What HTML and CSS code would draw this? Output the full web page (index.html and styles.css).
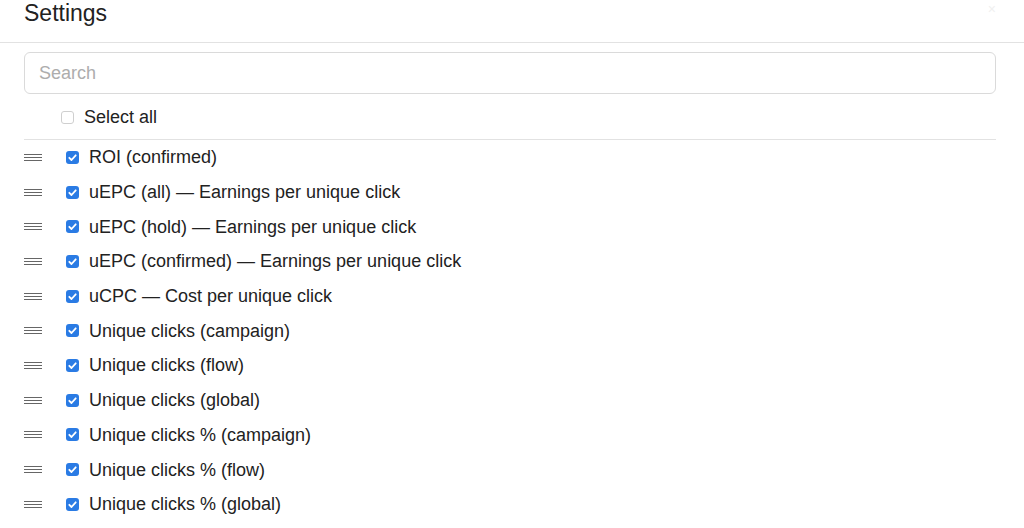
FILE: index.html
```html
<!DOCTYPE html>
<html>
<head>
<meta charset="utf-8">
<link rel="stylesheet" href="styles.css">
</head>
<body>
<div class="header">
  <h1 class="title">Settings</h1>
  <span class="close">×</span>
</div>
<div class="content">
  <div class="search">Search</div>
  <div class="select-all">
    <span class="box"></span>
    <span class="label">Select all</span>
  </div>
  <ul class="list">
    <li class="row"><span class="handle"><i></i><i></i><i></i></span><span class="check"><svg viewBox="0 0 13 13" width="13" height="13"><path d="M3.3 6.8 L5.5 9 L9.7 4.3" fill="none" stroke="#fff" stroke-width="1.8" stroke-linecap="round" stroke-linejoin="round"/></svg></span><span class="label">ROI (confirmed)</span></li>
    <li class="row"><span class="handle"><i></i><i></i><i></i></span><span class="check"><svg viewBox="0 0 13 13" width="13" height="13"><path d="M3.3 6.8 L5.5 9 L9.7 4.3" fill="none" stroke="#fff" stroke-width="1.8" stroke-linecap="round" stroke-linejoin="round"/></svg></span><span class="label">uEPC (all) — Earnings per unique click</span></li>
    <li class="row"><span class="handle"><i></i><i></i><i></i></span><span class="check"><svg viewBox="0 0 13 13" width="13" height="13"><path d="M3.3 6.8 L5.5 9 L9.7 4.3" fill="none" stroke="#fff" stroke-width="1.8" stroke-linecap="round" stroke-linejoin="round"/></svg></span><span class="label">uEPC (hold) — Earnings per unique click</span></li>
    <li class="row"><span class="handle"><i></i><i></i><i></i></span><span class="check"><svg viewBox="0 0 13 13" width="13" height="13"><path d="M3.3 6.8 L5.5 9 L9.7 4.3" fill="none" stroke="#fff" stroke-width="1.8" stroke-linecap="round" stroke-linejoin="round"/></svg></span><span class="label">uEPC (confirmed) — Earnings per unique click</span></li>
    <li class="row"><span class="handle"><i></i><i></i><i></i></span><span class="check"><svg viewBox="0 0 13 13" width="13" height="13"><path d="M3.3 6.8 L5.5 9 L9.7 4.3" fill="none" stroke="#fff" stroke-width="1.8" stroke-linecap="round" stroke-linejoin="round"/></svg></span><span class="label">uCPC — Cost per unique click</span></li>
    <li class="row"><span class="handle"><i></i><i></i><i></i></span><span class="check"><svg viewBox="0 0 13 13" width="13" height="13"><path d="M3.3 6.8 L5.5 9 L9.7 4.3" fill="none" stroke="#fff" stroke-width="1.8" stroke-linecap="round" stroke-linejoin="round"/></svg></span><span class="label">Unique clicks (campaign)</span></li>
    <li class="row"><span class="handle"><i></i><i></i><i></i></span><span class="check"><svg viewBox="0 0 13 13" width="13" height="13"><path d="M3.3 6.8 L5.5 9 L9.7 4.3" fill="none" stroke="#fff" stroke-width="1.8" stroke-linecap="round" stroke-linejoin="round"/></svg></span><span class="label">Unique clicks (flow)</span></li>
    <li class="row"><span class="handle"><i></i><i></i><i></i></span><span class="check"><svg viewBox="0 0 13 13" width="13" height="13"><path d="M3.3 6.8 L5.5 9 L9.7 4.3" fill="none" stroke="#fff" stroke-width="1.8" stroke-linecap="round" stroke-linejoin="round"/></svg></span><span class="label">Unique clicks (global)</span></li>
    <li class="row"><span class="handle"><i></i><i></i><i></i></span><span class="check"><svg viewBox="0 0 13 13" width="13" height="13"><path d="M3.3 6.8 L5.5 9 L9.7 4.3" fill="none" stroke="#fff" stroke-width="1.8" stroke-linecap="round" stroke-linejoin="round"/></svg></span><span class="label">Unique clicks % (campaign)</span></li>
    <li class="row"><span class="handle"><i></i><i></i><i></i></span><span class="check"><svg viewBox="0 0 13 13" width="13" height="13"><path d="M3.3 6.8 L5.5 9 L9.7 4.3" fill="none" stroke="#fff" stroke-width="1.8" stroke-linecap="round" stroke-linejoin="round"/></svg></span><span class="label">Unique clicks % (flow)</span></li>
    <li class="row"><span class="handle"><i></i><i></i><i></i></span><span class="check"><svg viewBox="0 0 13 13" width="13" height="13"><path d="M3.3 6.8 L5.5 9 L9.7 4.3" fill="none" stroke="#fff" stroke-width="1.8" stroke-linecap="round" stroke-linejoin="round"/></svg></span><span class="label">Unique clicks % (global)</span></li>
  </ul>
</div>
</body>
</html>
```
FILE: styles.css
```css
html, body {
  margin: 0;
  padding: 0;
  background: #fff;
  overflow: hidden;
}
body {
  font-family: "Liberation Sans", Arial, sans-serif;
  color: #222;
}
.header {
  height: 43px;
  box-sizing: border-box;
  border-bottom: 1px solid #e2e2e2;
  padding-left: 24px;
  display: flex;
  align-items: flex-start;
  justify-content: space-between;
}
.title {
  margin: 0;
  font-size: 23px;
  line-height: 26px;
  font-weight: normal;
  color: #222;
}
.close {
  font-size: 14px;
  line-height: 14px;
  color: #f0f0f0;
  margin-right: 28px;
  margin-top: 2px;
}
.content {
  padding: 9px 28px 0 24px;
}
.search {
  height: 42px;
  box-sizing: border-box;
  border: 1px solid #dadada;
  border-radius: 6px;
  padding-left: 14px;
  font-size: 18px;
  line-height: 40px;
  color: #adadad;
}
.select-all {
  height: 46px;
  box-sizing: border-box;
  display: flex;
  align-items: center;
  padding-left: 37px;
  padding-top: 1px;
  border-bottom: 1px solid #e2e2e2;
}
.box {
  width: 13px;
  height: 13px;
  box-sizing: border-box;
  border: 1px solid #cfcfcf;
  border-radius: 3px;
  margin-right: 10px;
  background: #fff;
}
.label {
  font-size: 18px;
  line-height: 20px;
  color: #222;
}
.list {
  list-style: none;
  margin: 0;
  padding: 0;
}
.row {
  height: 34.7px;
  display: flex;
  align-items: center;
}
.handle {
  width: 18px;
  display: flex;
  flex-direction: column;
  gap: 2px;
  margin-right: 24px;
}
.handle i {
  display: block;
  height: 1px;
  background: #666;
}
.check {
  width: 13px;
  height: 13px;
  border-radius: 3px;
  background: #2a7be4;
  margin-right: 10px;
  display: flex;
}
.check svg {
  display: block;
}
```
